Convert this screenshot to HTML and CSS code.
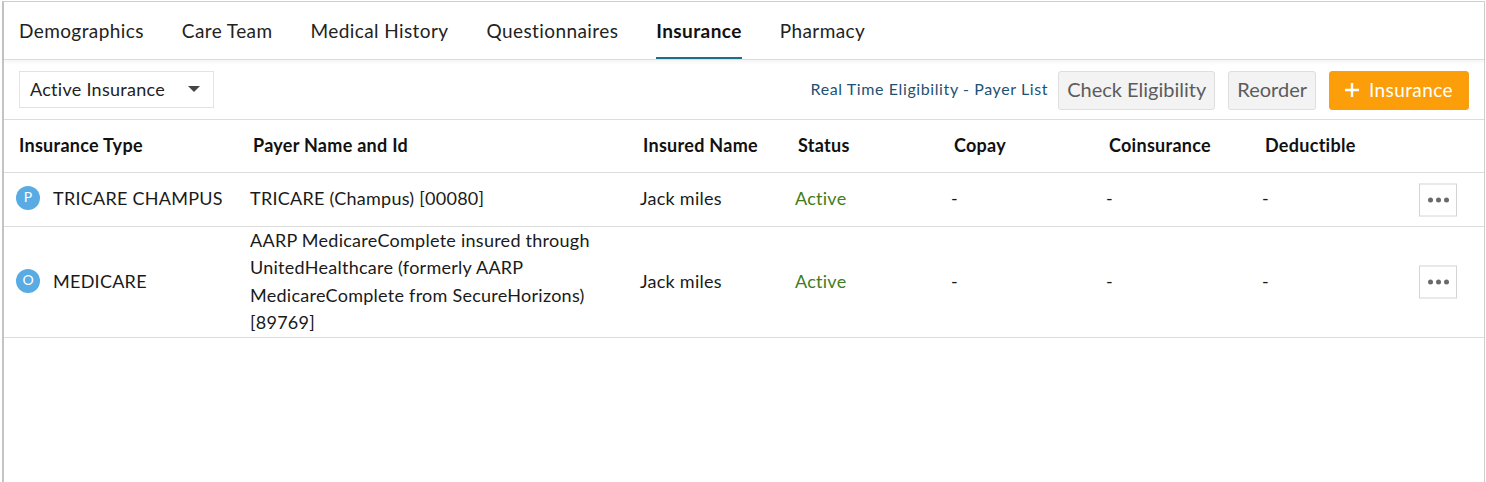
FILE: index.html
```html
<!DOCTYPE html>
<html lang="en">
<head>
    <meta charset="UTF-8">
    <title>Insurance</title>
    <link rel="stylesheet" href="styles.css">
</head>
<body>
    <div class="frame">
        <nav class="tabs">
            <a class="tab">Demographics</a>
            <a class="tab">Care Team</a>
            <a class="tab">Medical History</a>
            <a class="tab">Questionnaires</a>
            <a class="tab active">Insurance</a>
            <a class="tab">Pharmacy</a>
        </nav>

        <div class="toolbar">
            <div class="select">
                <span>Active Insurance</span>
                <span class="caret"></span>
            </div>
            <div class="actions">
                <a class="payer-link">Real Time Eligibility - Payer List</a>
                <button class="btn">Check Eligibility</button>
                <button class="btn btn-reorder">Reorder</button>
                <button class="btn btn-add">
                    <svg class="plus" width="16" height="16" viewBox="0 0 16 16"><path d="M8 1v14M1 8h14" stroke="#fff" stroke-width="2.4" fill="none"/></svg>
                    Insurance
                </button>
            </div>
        </div>

        <div class="row head">
            <div>Insurance Type</div>
            <div>Payer Name and Id</div>
            <div>Insured Name</div>
            <div>Status</div>
            <div>Copay</div>
            <div>Coinsurance</div>
            <div>Deductible</div>
        </div>

        <div class="row item item-short">
            <div class="type"><span class="badge">P</span>TRICARE CHAMPUS</div>
            <div>TRICARE (Champus) [00080]</div>
            <div>Jack miles</div>
            <div class="active-status">Active</div>
            <div>-</div>
            <div>-</div>
            <div>-</div>
            <button class="more"><i></i><i></i><i></i></button>
        </div>

        <div class="row item item-tall">
            <div class="type"><span class="badge">O</span>MEDICARE</div>
            <div class="payer">AARP MedicareComplete insured through UnitedHealthcare (formerly AARP MedicareComplete from SecureHorizons) [89769]</div>
            <div>Jack miles</div>
            <div class="active-status">Active</div>
            <div>-</div>
            <div>-</div>
            <div>-</div>
            <button class="more"><i></i><i></i><i></i></button>
        </div>
    </div>
</body>
</html>
```

FILE: styles.css
```css
html, body {
    margin: 0;
    height: 100%;
    background-color: #fff;
    overflow: hidden;
}

body {
    font-family: Lato, "Open Sans", sans-serif;
    color: #1c1c1c;
    padding: 1px 1px 0 2px;
    box-sizing: border-box;
}

.frame {
    height: 100%;
    box-sizing: border-box;
    border: 1px solid #cfcfcf;
    border-left: 2px solid #c4c4c4;
    border-bottom: none;
}

.tabs {
    display: flex;
    gap: 38px;
    height: 58px;
    padding-left: 15px;
    box-sizing: border-box;
    border-bottom: 1px solid #dcdcdc;
    box-shadow: 0 2px 4px rgba(0, 0, 0, 0.05);
}

.tab {
    font-size: 19px;
    letter-spacing: 0.41px;
    line-height: 57px;
    height: 57px;
    box-sizing: border-box;
    color: #222;
}

.tab.active {
    font-weight: 700;
    color: #111;
    border-bottom: 2px solid #1b6f87;
}

.toolbar {
    display: flex;
    justify-content: space-between;
    align-items: center;
    height: 60px;
    padding: 0 15px;
    box-sizing: border-box;
    border-bottom: 1px solid #dcdcdc;
}

.select {
    display: flex;
    justify-content: space-between;
    align-items: center;
    width: 195px;
    height: 37px;
    box-sizing: border-box;
    padding: 0 13px 2px 10px;
    border: 1px solid #e3e3e3;
    font-size: 18px;
    letter-spacing: 0.28px;
    color: #222;
}

.caret {
    width: 0;
    height: 0;
    border-left: 6px solid transparent;
    border-right: 6px solid transparent;
    border-top: 6px solid #444;
}

.actions {
    display: flex;
    align-items: center;
    margin-top: 2px;
}

.payer-link {
    font-size: 16px;
    letter-spacing: 0.6px;
    color: #1d5273;
    margin: 0 10px 5px 0;
}

.btn {
    height: 39px;
    padding: 0 8px 3px;
    font-family: inherit;
    font-size: 20px;
    color: #5c5c5c;
    background-color: #f3f3f3;
    border: 1px solid #dedede;
    border-radius: 3px;
}

.btn-reorder {
    margin-left: 13px;
}

.btn-add {
    display: flex;
    align-items: center;
    gap: 9px;
    margin-left: 13px;
    width: 140px;
    padding: 0 0 2px 14px;
    font-size: 19px;
    letter-spacing: 0.4px;
    color: #fff;
    background-color: #fc9e0a;
    border-color: #f3a01c;
}

.row {
    display: grid;
    grid-template-columns: 234px 390px 155px 156px 155px 156px 1fr;
    align-items: center;
    position: relative;
    border-bottom: 1px solid #dcdcdc;
    box-sizing: border-box;
}

.head {
    height: 53px;
    padding-left: 15px;
    font-size: 18px;
    letter-spacing: 0.28px;
    font-weight: 700;
    color: #111;
}

.head > div {
    padding-bottom: 2px;
}

.item {
    padding-left: 12px;
    font-size: 18px;
    letter-spacing: 0.26px;
    color: #1a1a1a;
}

.item-short {
    height: 54px;
}

.item-short > div {
    padding-bottom: 4px;
}

.item-tall {
    height: 111px;
}

.item-tall > div {
    padding-bottom: 3px;
}

.item-tall > .payer {
    padding-bottom: 1px;
    line-height: 27.25px;
    width: 350px;
}

.type {
    display: flex;
    align-items: center;
}

.badge {
    width: 24px;
    height: 24px;
    margin-right: 13px;
    border-radius: 50%;
    background-color: #58ace3;
    color: #fff;
    font-size: 14px;
    letter-spacing: 0;
    line-height: 22px;
    text-align: center;
}

.active-status {
    color: #3f7d20;
}

.more {
    position: absolute;
    right: 27px;
    top: 50%;
    transform: translateY(-50%);
    display: flex;
    justify-content: center;
    align-items: center;
    gap: 3px;
    width: 38px;
    height: 33px;
    padding: 0;
    background-color: #fff;
    border: 1px solid #d4d4d4;
}

.more i {
    width: 5px;
    height: 5px;
    border-radius: 50%;
    background-color: #6a6a6a;
}
```
